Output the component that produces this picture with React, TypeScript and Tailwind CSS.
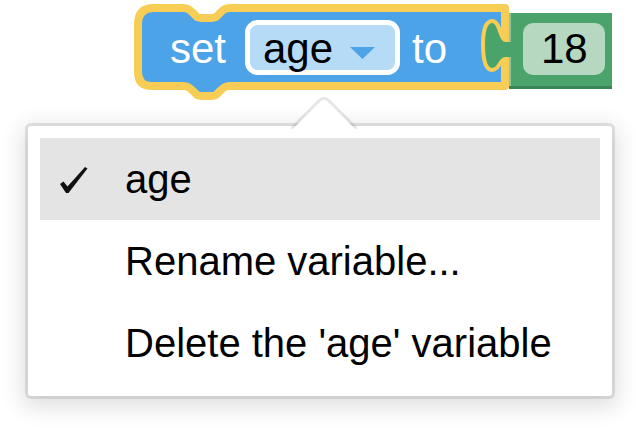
import React from "react";

const BLUE_PATH =
  "M138,24 Q138,8 154,8 L183,8 C188,8 190,10 193,13 L197,17 C199,18 200,18 202,18 L211,18 C213,18 214,18 216,17 L220,13 C223,10 225,8 230,8 L505,8 L505,42 C498,40 498,23 492,23 C487,23 485,33 485,45 C485,57 487,68 492,68 C498,68 498,58 505,57 L505,86 L230,86 C225,86 223,88 220,91 L216,95 C214,96 213,96 211,96 L202,96 C200,96 199,96 197,95 L193,91 C190,88 188,86 183,86 L152,86 Q138,86 138,72 Z";

const GREEN_PATH =
  "M509,13 L612,13 L612,89 L509,89 L509,57 L505,57 C498,58 498,68 492,68 C487,68 485,57 485,45 C485,33 487,23 492,23 C498,23 498,40 505,42 L509,42 Z";

// blockly-ish "set [age] to (18)" block, drawn as svg like the real thing
function SetBlock() {
  return (
    <svg width="636" height="104" viewBox="0 0 636 104" className="block">
      <path d={BLUE_PATH} fill="#4ca3e8" stroke="#f7cd55" strokeWidth="8" strokeLinejoin="round" />
      <path d={GREEN_PATH} fill="#4ba36c" />
      <rect x="509" y="86" width="103" height="3" fill="#3b8456" />
      <rect x="509" y="13" width="2" height="29" fill="#8cc7a0" />
      <rect x="509" y="57" width="2" height="29" fill="#8cc7a0" />

      <text x="170" y="63" fontSize="42" fill="#ffffff">set</text>

      <rect x="247.5" y="22.5" width="150" height="50" rx="10" fill="#b6dbf7" stroke="#ffffff" strokeWidth="5" />
      <text x="263" y="63" fontSize="42" fill="#000000">age</text>
      <polygon points="350,47 375,47 362.5,59" fill="#4ca3e8" />

      <text x="412" y="63" fontSize="42" fill="#ffffff">to</text>

      <rect x="523" y="23" width="82" height="52" rx="10" fill="#b6d8c1" />
      <text x="541" y="63" fontSize="42" fill="#000000">18</text>
    </svg>
  );
}

function Check() {
  return (
    <svg width="30" height="30" viewBox="0 0 30 30" className="block blur-[0.4px]">
      <path d="M1,18 L4.5,15.5 L8.5,20.5 L26,1 L28.5,2.5 L9.5,27 L7,27 Z" fill="#111111" />
    </svg>
  );
}

const ITEMS = [
  { label: "age", checked: true },
  { label: "Rename variable...", checked: false },
  { label: "Delete the 'age' variable", checked: false },
];

export default function App() {
  return (
    <div className="w-[636px] h-[428px] bg-white overflow-hidden font-['Liberation_Sans',Arial,sans-serif]">
      <SetBlock />

      <div className="relative ml-[28px] mt-[22px] w-[584px] rounded-[3px] bg-white p-3 shadow-[0_0_0_3px_rgba(60,60,80,0.13),0_6px_22px_6px_rgba(0,0,0,0.12)]">
        <div className="absolute left-[263px] top-[-33px] w-[66px] h-[36px] overflow-hidden">
          <div className="absolute left-[11px] top-[14px] w-[44px] h-[44px] rotate-45 rounded-tl-[5px] bg-white shadow-[0_0_0_3px_rgba(60,60,80,0.13)]" />
        </div>

        {ITEMS.map((item) => (
          <div
            key={item.label}
            className={`flex items-center h-[82px] ${item.checked ? "bg-[#e4e4e4]" : ""}`}
          >
            <div className="w-[85px] pl-[19px] pt-[3px]">{item.checked && <Check />}</div>
            <span className="text-[40px] text-black">{item.label}</span>
          </div>
        ))}
      </div>
    </div>
  );
}
